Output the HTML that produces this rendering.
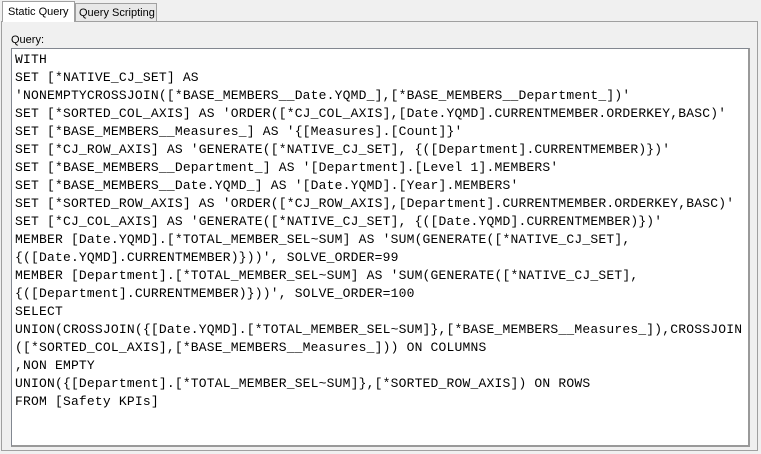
<!DOCTYPE html>
<html><head><style>
body{margin:0;width:761px;height:454px;background:#f0f0f0;position:relative;overflow:hidden;font-family:"Liberation Sans",sans-serif;}
.tab{position:absolute;font-size:11px;color:#000;box-sizing:border-box;white-space:nowrap;}
#t1{left:2px;top:1px;width:73px;height:21px;background:#fff;border:1px solid #a0a0a0;border-bottom:none;padding:4px 0 0 5px;z-index:2}
#t2{left:75px;top:3px;width:82px;height:18px;background:#e8e8e8;border:1px solid #a0a0a0;border-bottom:none;padding:3px 0 0 3px}
#panel{position:absolute;left:1px;top:21px;width:757px;height:430px;border:1px solid #a0a0a0;box-sizing:border-box;background:#f0f0f0}
#lbl{position:absolute;left:11px;top:34px;font-size:11px}
#ta{position:absolute;left:11px;top:48px;width:739px;height:399px;box-sizing:border-box;border:1px solid #828790;border-right:2px solid #999;border-bottom:2px solid #999;background:#fff;overflow:hidden}
pre{margin:0;position:absolute;left:3px;top:2px;font-family:"Liberation Mono",monospace;font-size:13px;letter-spacing:0.19px;line-height:18px;color:#000}
</style></head><body>
<div id="panel"></div>
<div class="tab" id="t1">Static Query</div>
<div class="tab" id="t2">Query Scripting</div>
<div id="lbl">Query:</div>
<div id="ta"><pre>WITH
SET [*NATIVE_CJ_SET] AS
'NONEMPTYCROSSJOIN([*BASE_MEMBERS__Date.YQMD_],[*BASE_MEMBERS__Department_])'
SET [*SORTED_COL_AXIS] AS 'ORDER([*CJ_COL_AXIS],[Date.YQMD].CURRENTMEMBER.ORDERKEY,BASC)'
SET [*BASE_MEMBERS__Measures_] AS '{[Measures].[Count]}'
SET [*CJ_ROW_AXIS] AS 'GENERATE([*NATIVE_CJ_SET], {([Department].CURRENTMEMBER)})'
SET [*BASE_MEMBERS__Department_] AS '[Department].[Level 1].MEMBERS'
SET [*BASE_MEMBERS__Date.YQMD_] AS '[Date.YQMD].[Year].MEMBERS'
SET [*SORTED_ROW_AXIS] AS 'ORDER([*CJ_ROW_AXIS],[Department].CURRENTMEMBER.ORDERKEY,BASC)'
SET [*CJ_COL_AXIS] AS 'GENERATE([*NATIVE_CJ_SET], {([Date.YQMD].CURRENTMEMBER)})'
MEMBER [Date.YQMD].[*TOTAL_MEMBER_SEL~SUM] AS 'SUM(GENERATE([*NATIVE_CJ_SET],
{([Date.YQMD].CURRENTMEMBER)}))', SOLVE_ORDER=99
MEMBER [Department].[*TOTAL_MEMBER_SEL~SUM] AS 'SUM(GENERATE([*NATIVE_CJ_SET],
{([Department].CURRENTMEMBER)}))', SOLVE_ORDER=100
SELECT
UNION(CROSSJOIN({[Date.YQMD].[*TOTAL_MEMBER_SEL~SUM]},[*BASE_MEMBERS__Measures_]),CROSSJOIN
([*SORTED_COL_AXIS],[*BASE_MEMBERS__Measures_])) ON COLUMNS
,NON EMPTY
UNION({[Department].[*TOTAL_MEMBER_SEL~SUM]},[*SORTED_ROW_AXIS]) ON ROWS
FROM [Safety KPIs]</pre></div>
</body></html>
